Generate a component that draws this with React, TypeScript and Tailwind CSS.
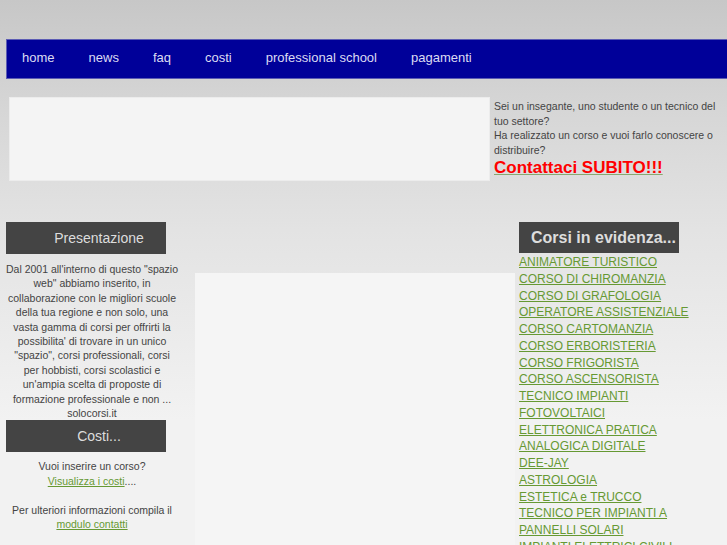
import React from "react";

const navItems = ["home", "news", "faq", "costi", "professional school", "pagamenti"];

const corsi = [
  "ANIMATORE TURISTICO",
  "CORSO DI CHIROMANZIA",
  "CORSO DI GRAFOLOGIA",
  "OPERATORE ASSISTENZIALE",
  "CORSO CARTOMANZIA",
  "CORSO ERBORISTERIA",
  "CORSO FRIGORISTA",
  "CORSO ASCENSORISTA",
  "TECNICO IMPIANTI FOTOVOLTAICI",
  "ELETTRONICA PRATICA ANALOGICA DIGITALE",
  "DEE-JAY",
  "ASTROLOGIA",
  "ESTETICA e TRUCCO",
  "TECNICO PER IMPIANTI A PANNELLI SOLARI",
  "IMPIANTI ELETTRICI CIVILI",
];

const presentazione = [
  'Dal 2001 all\'interno di questo "spazio',
  'web" abbiamo inserito, in',
  "collaborazione con le migliori scuole",
  "della tua regione e non solo, una",
  "vasta gamma di corsi per offrirti la",
  "possibilita' di trovare in un unico",
  '"spazio", corsi professionali, corsi',
  "per hobbisti, corsi scolastici e",
  "un'ampia scelta di proposte di",
  "formazione professionale e non ...",
  "solocorsi.it",
];

function BoxTitle({ children }: { children: React.ReactNode }) {
  return (
    <div className="ml-[2px] flex h-[32px] w-[160px] items-center justify-center bg-[#444444] pl-[26px] text-[14px] text-[#dddddd]">
      {children}
    </div>
  );
}

export default function App() {
  return (
    <div
      className="min-h-screen overflow-hidden bg-[linear-gradient(to_bottom,#c7c7c7_0px,#d6d6d6_110px,#e3e3e3_230px,#f2f2f2_420px)] pt-[39px] text-[#444444]"
      style={{ fontFamily: '"Liberation Sans", Arial, sans-serif' }}
    >
      {/* menu */}
      <nav className="ml-[6px] flex h-[40px] items-center gap-[34px] border border-r-0 border-[#5c5cb4] bg-[#000099] pb-[2px] pl-[15px] text-[13px] text-[#dcdcf2]">
        {navItems.map((item) => (
          <a key={item} href="#" className="whitespace-nowrap">
            {item}
          </a>
        ))}
      </nav>

      {/* banner */}
      <div className="mt-[18px] flex">
        <div className="ml-[9px] h-[84px] w-[481px] border border-[#ececec] bg-[#f4f4f4]" />
        <div className="ml-[4px] w-[228px] pt-[2px] text-[10.5px] leading-[14.5px] text-[#444444]">
          <p>Sei un insegante, uno studente o un tecnico del tuo settore?</p>
          <p>Ha realizzato un corso e vuoi farlo conoscere o distribuire?</p>
          <a
            href="#"
            className="block text-[17px] font-bold leading-[22px] text-[#ff0000] underline decoration-[#88a870]"
          >
            Contattaci SUBITO!!!
          </a>
        </div>
      </div>

      {/* columns */}
      <div className="mt-[41px] flex items-start">
        <div className="ml-[4px] w-[176px]">
          <BoxTitle>Presentazione</BoxTitle>
          <p className="mt-[8px] text-center text-[10.5px] leading-[14.4px]">
            {presentazione.map((line) => (
              <span key={line} className="block whitespace-nowrap">
                {line}
              </span>
            ))}
          </p>
          <BoxTitle>Costi...</BoxTitle>
          <div className="mt-[7px] text-center text-[10.5px] leading-[14.5px]">
            <p>Vuoi inserire un corso?</p>
            <p>
              <a href="#" className="text-[#669933] underline">
                Visualizza i costi
              </a>
              ....
            </p>
            <p>&nbsp;</p>
            <p>Per ulteriori informazioni compila il</p>
            <a href="#" className="text-[#669933] underline">
              modulo contatti
            </a>
          </div>
        </div>

        <div className="ml-[15px] mt-[51px] h-[300px] w-[320px] bg-[#f5f5f5]" />

        <div className="ml-[4px] w-[190px]">
          <div className="flex h-[31px] w-[160px] items-center whitespace-nowrap bg-[#444444] pl-[12px] text-[16px] font-bold text-[#dddddd]">
            Corsi in evidenza...
          </div>
          <ul className="pt-[1px] text-[12px] leading-[16.75px]">
            {corsi.map((c) => (
              <li key={c}>
                <a href="#" className="text-[#669933] underline">
                  {c}
                </a>
              </li>
            ))}
          </ul>
        </div>
      </div>
    </div>
  );
}
